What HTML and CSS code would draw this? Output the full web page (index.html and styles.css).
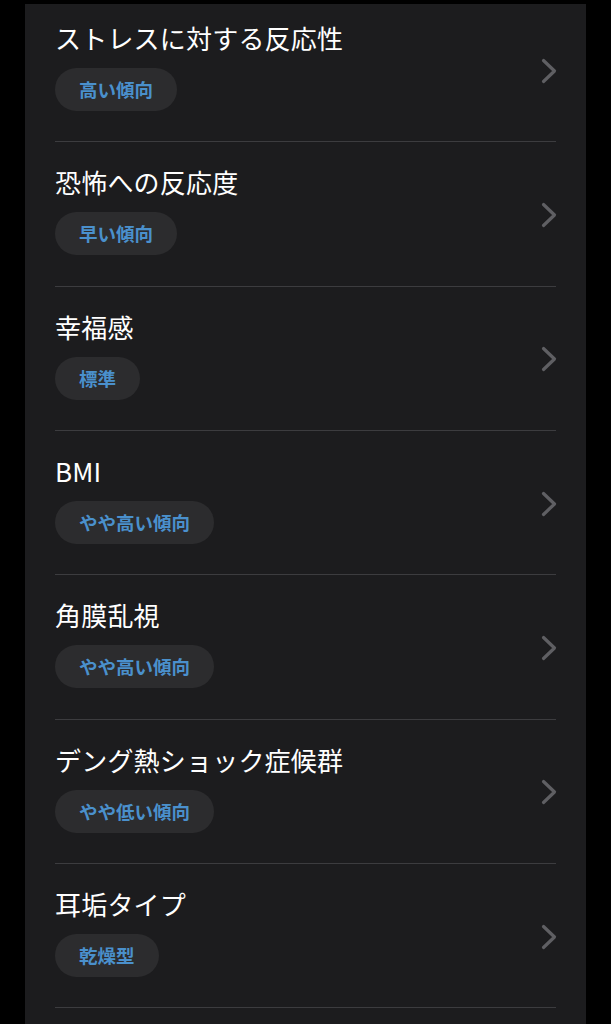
FILE: index.html
```html
<!DOCTYPE html>
<html lang="ja">
<head>
	<meta charset="UTF-8">
	<title>結果一覧</title>
	<link rel="stylesheet" href="styles.css">
</head>
<body>
	<div class="topbar"></div>
	<div class="card">
		<ul class="list">
			<li class="row">
				<div class="info">
					<p class="title">ストレスに対する反応性</p>
					<span class="tag">高い傾向</span>
				</div>
				<svg class="chevron" width="16" height="26" viewBox="0 0 16 26"><path d="M2.5 2.5 L13.5 13 L2.5 23.5"/></svg>
			</li>
			<li class="row">
				<div class="info">
					<p class="title">恐怖への反応度</p>
					<span class="tag">早い傾向</span>
				</div>
				<svg class="chevron" width="16" height="26" viewBox="0 0 16 26"><path d="M2.5 2.5 L13.5 13 L2.5 23.5"/></svg>
			</li>
			<li class="row">
				<div class="info">
					<p class="title">幸福感</p>
					<span class="tag">標準</span>
				</div>
				<svg class="chevron" width="16" height="26" viewBox="0 0 16 26"><path d="M2.5 2.5 L13.5 13 L2.5 23.5"/></svg>
			</li>
			<li class="row">
				<div class="info">
					<p class="title">BMI</p>
					<span class="tag">やや高い傾向</span>
				</div>
				<svg class="chevron" width="16" height="26" viewBox="0 0 16 26"><path d="M2.5 2.5 L13.5 13 L2.5 23.5"/></svg>
			</li>
			<li class="row">
				<div class="info">
					<p class="title">角膜乱視</p>
					<span class="tag">やや高い傾向</span>
				</div>
				<svg class="chevron" width="16" height="26" viewBox="0 0 16 26"><path d="M2.5 2.5 L13.5 13 L2.5 23.5"/></svg>
			</li>
			<li class="row">
				<div class="info">
					<p class="title">デング熱ショック症候群</p>
					<span class="tag">やや低い傾向</span>
				</div>
				<svg class="chevron" width="16" height="26" viewBox="0 0 16 26"><path d="M2.5 2.5 L13.5 13 L2.5 23.5"/></svg>
			</li>
			<li class="row">
				<div class="info">
					<p class="title">耳垢タイプ</p>
					<span class="tag">乾燥型</span>
				</div>
				<svg class="chevron" width="16" height="26" viewBox="0 0 16 26"><path d="M2.5 2.5 L13.5 13 L2.5 23.5"/></svg>
			</li>
		</ul>
	</div>
</body>
</html>
```

FILE: styles.css
```css
* {
	margin: 0;
	padding: 0;
	box-sizing: border-box;
}
html, body {
	background-color: #000;
	height: 1024px;
	overflow: hidden;
}
body {
	font-family: "Noto Sans CJK JP", "Noto Sans", sans-serif;
	color: #fff;
}
/* 上の黒い帯（スクロールした内容の上に重なる） */
.topbar {
	position: fixed;
	top: 0;
	left: 0;
	right: 0;
	height: 4px;
	background-color: #000;
	z-index: 2;
}
.card {
	width: 561px;
	height: 1030px;
	margin: -2px 0 0 25px;
	padding: 0 30px;
	background-color: #1c1c1e;
}
.list {
	list-style: none;
}
.row {
	height: 144.33px;
	border-bottom: 1.5px solid #3c3c3f;
	display: flex;
	align-items: center;
	justify-content: space-between;
}
.info {
	display: flex;
	flex-direction: column;
	align-items: flex-start;
	padding-bottom: 6px;
}
.title {
	font-size: 26px;
	line-height: 32px;
	font-weight: 400;
	letter-spacing: 0.2px;
}
.tag {
	display: inline-block;
	margin-top: 14px;
	height: 43px;
	line-height: 43px;
	padding: 0 24px;
	border-radius: 22px;
	background-color: #2c2c2e;
	color: #4a90cc;
	font-size: 18.5px;
	font-weight: 700;
}
.chevron {
	flex: none;
	margin-right: -1px;
	margin-top: 2px;
}
.chevron path {
	fill: none;
	stroke: #5f5f63;
	stroke-width: 3.2;
	stroke-linecap: round;
	stroke-linejoin: round;
}
```
